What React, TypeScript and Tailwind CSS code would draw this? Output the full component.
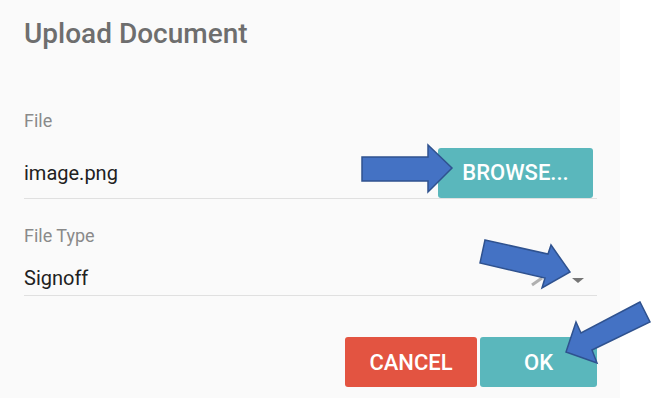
import React from "react";

const font = { fontFamily: "Roboto, 'Noto Sans', sans-serif" };

function Arrows() {
  return (
    <svg
      className="pointer-events-none absolute left-0 top-0"
      width={658}
      height={398}
      viewBox="0 0 658 398"
    >
      {/* grey stroke of the select behind the arrow */}
      <line x1={532} y1={285} x2={542} y2={278} stroke="#b0b0b0" strokeWidth={3} />
      <g fill="#4472C4" stroke="#2F528F" strokeWidth={1.5} strokeLinejoin="miter">
        <polygon points="362,157 428,157 428,145 452,168 428,192 428,181 362,181" />
        <polygon points="485,240 548,254 551,245 570,272 542,288 545,278 480,263" />
        <polygon points="640,302 581,333 576,322 566,352 597,363 592,350 650,322" />
      </g>
    </svg>
  );
}

export default function App() {
  return (
    <div className="relative flex h-[398px] w-[658px] bg-white" style={font}>
      <div className="flex h-full w-[620px] flex-col bg-[#fafafa] pl-6 pr-[23px]">
        <h2 className="mt-[17px] text-[28px] font-medium leading-[33px] text-[#6e6e6e]">
          Upload Document
        </h2>

        <label className="mt-[60px] text-lg leading-[22px] text-[#8a8a8a]">File</label>
        <div className="mt-[15px] flex h-[52px] items-center justify-between border-b border-[#e0e0e0]">
          <span className="text-[20px] leading-[26px] text-[#212121]">image.png</span>
          <button className="mr-1 flex h-[50px] w-[155px] items-center justify-center rounded-[3px] bg-[#5ab7bc] text-[22px] font-medium text-white">
            BROWSE...
          </button>
        </div>

        <label className="mt-[26px] text-lg leading-[22px] text-[#8a8a8a]">File Type</label>
        <div className="mt-[18px] flex items-center justify-between border-b border-[#e0e0e0] pb-1">
          <span className="text-[20px] leading-[26px] text-[#212121]">Signoff</span>
          <span className="mr-[13px] mt-[4px] h-0 w-0 border-x-[6px] border-t-[5px] border-x-transparent border-t-[#757575]" />
        </div>

        <div className="mt-[41px] flex justify-end gap-[3px]">
          <button className="flex h-[50px] w-[132px] items-center justify-center rounded-[3px] bg-[#e35441] text-[22px] font-medium text-white">
            CANCEL
          </button>
          <button className="flex h-[50px] w-[117px] items-center justify-center rounded-[3px] bg-[#5ab7bc] text-[22px] font-medium text-white">
            OK
          </button>
        </div>
      </div>
      <Arrows />
    </div>
  );
}
